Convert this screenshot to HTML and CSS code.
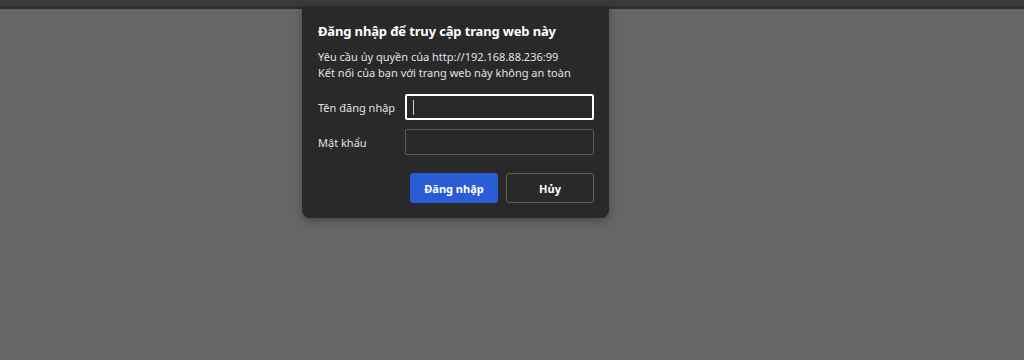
FILE: index.html
```html
<!DOCTYPE html>
<html lang="vi">
<head>
<meta charset="utf-8">
<title>Đăng nhập</title>
<link rel="stylesheet" href="styles.css">
</head>
<body>
<div class="topbar"><div class="topbar-line"></div></div>
<div class="page"></div>
<div class="dialog">
  <h1 class="title">Đăng nhập để truy cập trang web này</h1>
  <p class="info">Yêu cầu ủy quyền của http://192.168.88.236:99<br>Kết nối của bạn với trang web này không an toàn</p>
  <div class="form">
    <label class="row">
      <span class="label">Tên đăng nhập</span>
      <span class="input focused"><span class="caret"></span></span>
    </label>
    <label class="row">
      <span class="label">Mật khẩu</span>
      <span class="input"></span>
    </label>
  </div>
  <div class="actions">
    <button class="btn primary">Đăng nhập</button>
    <button class="btn secondary">Hủy</button>
  </div>
</div>
</body>
</html>
```
FILE: styles.css
```css
* { box-sizing: border-box; }
html, body { margin: 0; padding: 0; height: 100%; }
body {
  background: #666666;
  font-family: "Noto Sans", "Open Sans", sans-serif;
  overflow: hidden;
}
.topbar {
  height: 9px;
  background: #3a3a3a;
  padding-top: 5px;
}
.topbar-line {
  height: 1px;
  background: #707070;
}
.topbar-line::after {
  content: "";
  display: block;
  height: 3px;
  background: #2f2f2f;
  margin-top: 1px;
}
.page { height: 351px; background: #666666; }
.dialog {
  position: absolute;
  left: 302px;
  top: 7px;
  width: 307px;
  height: 211px;
  background: #292929;
  border-radius: 0 0 8px 8px;
  box-shadow: 0 2px 8px rgba(0,0,0,0.35);
  padding: 15px 15px 0 16px;
  color: #e6e6e6;
}
.title {
  margin: 0;
  font-size: 13px;
  font-weight: 700;
  color: #ffffff;
  line-height: 18px;
  letter-spacing: -0.15px;
}
.info {
  margin: 9px 0 0;
  font-size: 11px;
  line-height: 16px;
  color: #e2e2e2;
}
.form {
  margin-top: 13px;
  display: flex;
  flex-direction: column;
  gap: 9px;
}
.row {
  display: flex;
  align-items: center;
}
.label {
  width: 87px;
  font-size: 11px;
  color: #e2e2e2;
}
.input {
  width: 189px;
  height: 26px;
  border: 1px solid #5a5a5a;
  border-radius: 2px;
  background: #282828;
  display: flex;
  align-items: center;
  padding-left: 7px;
}
.input.focused {
  border: 2px solid #ffffff;
  padding-left: 6px;
}
.caret {
  width: 1px;
  height: 15px;
  background: #d0d0d0;
}
.actions {
  margin-top: 18px;
  display: flex;
  justify-content: flex-end;
  gap: 8px;
}
.btn {
  width: 88px;
  height: 30px;
  border-radius: 3px;
  font-family: inherit;
  font-size: 11px;
  font-weight: 700;
  color: #ffffff;
  cursor: default;
}
.primary {
  background: #2a5cd6;
  border: 1px solid #2a5cd6;
}
.secondary {
  background: #292929;
  border: 1px solid #5f5f5f;
}
```
